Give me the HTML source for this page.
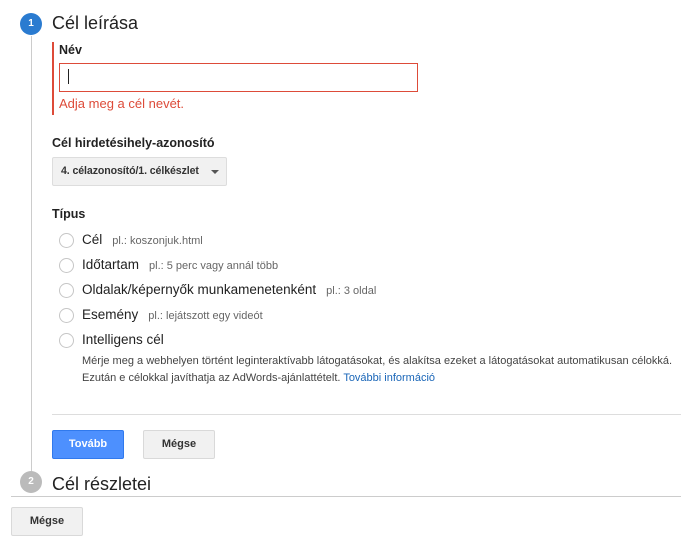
<!DOCTYPE html><html><head><meta charset="utf-8"><style>
body{margin:0;width:681px;height:556px;background:#fff;font-family:"Liberation Sans",Arial,sans-serif;position:relative;overflow:hidden;color:#222}
.a{position:absolute;white-space:nowrap}
.c{position:absolute;border-radius:50%;color:#fff;font-size:10px;font-weight:bold;text-align:center}
.r{position:absolute;left:59px;width:13px;height:13px;border:1px solid #c6c6c6;border-radius:50%}
.l{position:absolute;left:82px;font-size:13.5px;color:#222;white-space:nowrap}
.h{font-size:11px;color:#666;margin-left:10px}
.btn{position:absolute;height:27px;line-height:27px;text-align:center;font-size:11px;font-weight:bold;border-radius:2px}
.g{background:#f1f1f1;border:1px solid #d9d9d9;color:#333}
</style></head><body>
<div class="a" style="left:31px;top:36px;width:1px;height:436px;background:#ccc"></div>
<div class="c" style="left:20px;top:13px;width:22px;height:22px;line-height:22px;background:#2a7bd0">1</div>
<div class="a" style="left:52px;top:13px;font-size:18px;color:#222">Cél leírása</div>
<div class="a" style="left:52px;top:42px;width:2px;height:73px;background:#dd4b39"></div>
<div class="a" style="left:59px;top:43px;font-size:12.5px;font-weight:bold">Név</div>
<div class="a" style="left:59px;top:63px;width:357px;height:27px;border:1px solid #dd4b39 !important;box-shadow:none"></div>
<div class="a" style="left:68px;top:69px;width:1px;height:15px;background:#222"></div>
<div class="a" style="left:59px;top:96px;font-size:13px;color:#dd4b39">Adja meg a cél nevét.</div>
<div class="a" style="left:52px;top:136px;font-size:12.5px;font-weight:bold">Cél hirdetésihely-azonosító</div>
<div class="a" style="left:52px;top:157px;width:173px;height:27px;background:#f1f1f1;border:1px solid #ddd;border-radius:2px"></div>
<div class="a" style="left:61px;top:165px;font-size:10.6px;font-weight:bold;color:#333;letter-spacing:-0.1px">4. célazonosító/1. célkészlet</div>
<div class="a" style="left:211px;top:170px;width:0;height:0;border-left:4px solid transparent;border-right:4px solid transparent;border-top:4px solid #555"></div>
<div class="a" style="left:52px;top:207px;font-size:12.5px;font-weight:bold">Típus</div>
<div class="r" style="top:233px"></div><div class="l" style="top:232px">Cél<span class="h">pl.: koszonjuk.html</span></div>
<div class="r" style="top:258px"></div><div class="l" style="top:257px">Időtartam<span class="h">pl.: 5 perc vagy annál több</span></div>
<div class="r" style="top:283px"></div><div class="l" style="top:282px">Oldalak/képernyők munkamenetenként<span class="h">pl.: 3 oldal</span></div>
<div class="r" style="top:308px"></div><div class="l" style="top:307px">Esemény<span class="h">pl.: lejátszott egy videót</span></div>
<div class="r" style="top:333px"></div><div class="l" style="top:332px">Intelligens cél</div>
<div class="a" style="left:82px;top:353px;font-size:11px;color:#444;line-height:17px">Mérje meg a webhelyen történt leginteraktívabb látogatásokat, és alakítsa ezeket a látogatásokat automatikusan célokká.<br>Ezután e célokkal javíthatja az AdWords-ajánlattételt. <span style="color:#1a66b8">További információ</span></div>
<div class="a" style="left:52px;top:414px;width:629px;height:1px;background:#ddd"></div>
<div class="btn" style="left:52px;top:430px;width:70px;background:#4d90fe;border:1px solid #3079ed;color:#fff">Tovább</div>
<div class="btn g" style="left:143px;top:430px;width:70px">Mégse</div>
<div class="c" style="left:20px;top:471px;width:22px;height:22px;line-height:22px;background:#bbb">2</div>
<div class="a" style="left:52px;top:474px;font-size:18px;color:#222">Cél részletei</div>
<div class="a" style="left:11px;top:496px;width:670px;height:1px;background:#ccc"></div>
<div class="btn g" style="left:11px;top:507px;width:70px">Mégse</div>
</body></html>
